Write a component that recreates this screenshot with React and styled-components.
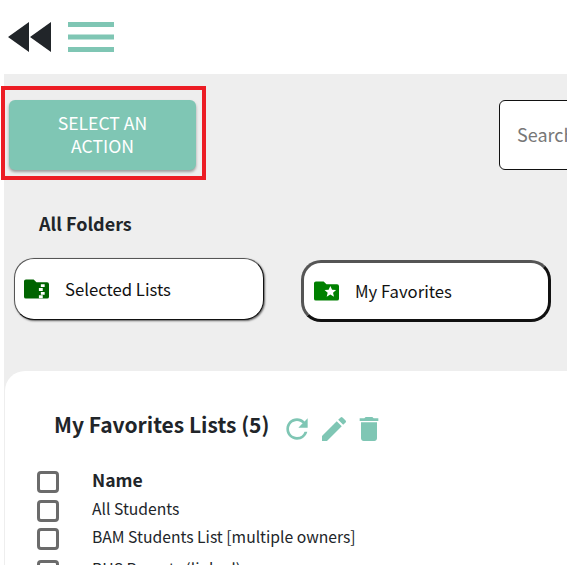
import React from 'react'
import styled, { createGlobalStyle } from 'styled-components'
import { MdRefresh, MdEdit, MdDelete } from 'react-icons/md'

const Global = createGlobalStyle`
  html, body { margin: 0; padding: 0; height: 100%; overflow: hidden; background: #fff; }
  body { font-family: "Noto Sans CJK SC", "Noto Sans", sans-serif; color: #212529; }
`

const Page = styled.div`
  width: 567px;
  height: 565px;
  overflow: hidden;
`

const TopBar = styled.div`
  height: 74px;
  display: flex;
  align-items: flex-start;
  padding: 22px 0 0 8px;
  box-sizing: border-box;
  gap: 17px;
`

const Main = styled.div`
  margin-left: 4px;
  width: 600px;
  background: #eee;
  height: 491px;
`

const ActionRow = styled.div`
  height: 106px;
  display: flex;
  align-items: flex-start;
`

const Highlight = styled.div`
  flex: none;
  margin: 12px 0 0 -3px;
  width: 205px;
  height: 94px;
  box-sizing: border-box;
  border: 4px solid #ec1c24;
  padding: 10px 4px;
`

const ActionButton = styled.button`
  display: block;
  width: 187px;
  height: 70px;
  border: 0;
  border-radius: 6px;
  background: #7fc6b4;
  color: #fff;
  font: 400 17.6px/23px "Noto Sans CJK SC", sans-serif;
  padding: 0 20px 3px;
  box-shadow: 0 2px 3px rgba(0, 0, 0, 0.35);
`

const SearchBox = styled.div`
  flex: none;
  margin: 26px 0 0 293px;
  width: 100px;
  height: 70px;
  box-sizing: border-box;
  border: 1px solid #111;
  border-radius: 6px;
  background: #fff;
  color: #777;
  font-size: 18px;
  line-height: 66px;
  padding-left: 17px;
`

const FoldersTitle = styled.div`
  font-size: 18px;
  font-weight: 700;
  line-height: 24px;
  padding: 31px 0 0 35px;
  height: 47px;
`

const FolderRow = styled.div`
  display: flex;
  align-items: flex-start;
  padding-left: 10px;
  height: 113px;
`

const FolderCard = styled.div`
  width: 250px;
  height: 62px;
  margin: ${p => (p.$active ? '2px 0 0 37px' : '0')};
  box-sizing: border-box;
  display: flex;
  align-items: center;
  gap: 16px;
  padding-left: ${p => (p.$active ? '10px' : '9px')};
  background: #fff;
  border-radius: 20px;
  border: ${p => (p.$active ? '3px' : '1px')} solid;
  border-color: #555 #111 #111 #555;
  box-shadow: ${p => (p.$active ? 'none' : '1px 1px 2px rgba(0, 0, 0, 0.6)')};
  font-size: 16.7px;
  color: #111;
`

const FolderGlyph = styled.svg`
  width: 25px;
  height: 20px;
  flex: none;
`

const ListCard = styled.div`
  margin-left: 1px;
  height: 200px;
  background: #fff;
  border-radius: 20px 0 0 0;
  padding: 38px 0 0 32px;
`

const ListHeading = styled.div`
  display: flex;
  align-items: flex-start;
  height: 58px;
  padding-left: 17px;
`

const ListTitle = styled.h2`
  margin: 0;
  font-size: 21px;
  font-weight: 700;
  line-height: 30px;
  color: #212529;
`

const Tools = styled.div`
  display: flex;
  gap: 5px;
  margin: 4px 0 0 12px;
  color: #7fc6b4;
  font-size: 32px;
  line-height: 0;

  svg:last-child {
    margin-left: -2px;
  }
`

const Row = styled.div`
  display: flex;
  align-items: center;
  height: ${p => p.$h}px;
  font-size: ${p => (p.$head ? '17.6px' : '15.7px')};
  font-weight: ${p => (p.$head ? 700 : 400)};
  color: #212529;
`

const Check = styled.span`
  width: 22px;
  height: 22px;
  box-sizing: border-box;
  border: 3px solid #6b6b6b;
  border-radius: 4px;
  background: #fff;
  flex: none;
  margin-right: 33px;
`

const RowLabel = styled.span`
  padding-bottom: 6px;
  white-space: nowrap;
`

const folderPath = 'M2 0h8l3 3h11a2 2 0 0 1 2 2v13a2 2 0 0 1-2 2H2a2 2 0 0 1-2-2V2a2 2 0 0 1 2-2z'

function FolderZip() {
  return (
    <FolderGlyph viewBox="0 0 26 20">
      <path fill="#006400" d={folderPath} />
      <path fill="#fff" d="M17.500 5h4v3h-4zM15.500 9h4v3h-4zM17.500 13h4v3h-4zM15.500 16.500h4v3h-4z" />
    </FolderGlyph>
  )
}

function FolderStar() {
  return (
    <FolderGlyph viewBox="0 0 26 20">
      <path fill="#008000" d={folderPath} />
      <path fill="#fff" d="M17 4.700l1.800 3.900 4.200.4-3.200 2.800 1 4.200-3.800-2.300-3.800 2.300 1-4.200-3.200-2.800 4.200-.4z" />
    </FolderGlyph>
  )
}

const rows = [
  { name: 'All Students', h: 28 },
  { name: 'BAM Students List [multiple owners]', h: 28 },
  { name: 'BHS Parents (linked)', h: 36 },
]

export default function App() {
  return (
    <Page>
      <Global />
      <TopBar>
        <svg width="43" height="30" viewBox="0 0 43 30">
          <path fill="#212529" d="M0 15 21 0v30zM22 15 43 0v30z" />
        </svg>
        <svg width="46" height="30" viewBox="0 0 46 30">
          <path fill="#7fc6b4" d="M0 0h46v5H0zM0 12.500h46v5H0zM0 25h46v5H0z" />
        </svg>
      </TopBar>
      <Main>
        <ActionRow>
          <Highlight>
            <ActionButton>SELECT AN ACTION</ActionButton>
          </Highlight>
          <SearchBox>Search</SearchBox>
        </ActionRow>
        <FoldersTitle>All Folders</FoldersTitle>
        <FolderRow>
          <FolderCard>
            <FolderZip />
            Selected Lists
          </FolderCard>
          <FolderCard $active>
            <FolderStar />
            My Favorites
          </FolderCard>
        </FolderRow>
        <ListCard>
          <ListHeading>
            <ListTitle>My Favorites Lists (5)</ListTitle>
            <Tools>
              <MdRefresh />
              <MdEdit />
              <MdDelete />
            </Tools>
          </ListHeading>
          <Row $head $h={30}>
            <Check />
            <RowLabel>Name</RowLabel>
          </Row>
          {rows.map(row => (
            <Row key={row.name} $h={row.h}>
              <Check />
              <RowLabel>{row.name}</RowLabel>
            </Row>
          ))}
        </ListCard>
      </Main>
    </Page>
  )
}
